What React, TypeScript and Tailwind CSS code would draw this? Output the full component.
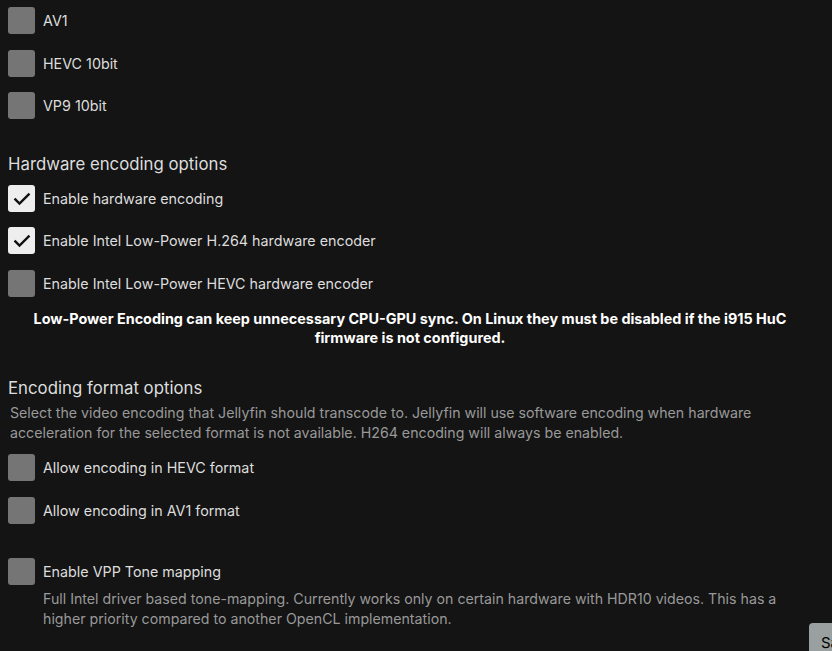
import React from "react";

function Check({ checked }: { checked?: boolean }) {
  return (
    <span
      className={`flex h-[27px] w-[27px] shrink-0 items-center justify-center rounded-[3px] ${
        checked ? "bg-[#eeeeee]" : "bg-[#757575]"
      }`}
    >
      {checked && (
        <svg width="20" height="20" viewBox="0 0 24 24" fill="none">
          <path d="M4 12.5l5 5L20 6.5" stroke="#111" strokeWidth="2.8" strokeLinecap="square" />
        </svg>
      )}
    </span>
  );
}

function Row({ label, checked, className = "" }: { label: string; checked?: boolean; className?: string }) {
  return (
    <label className={`flex items-center gap-[8px] pl-[8px] ${className}`}>
      <Check checked={checked} />
      <span className="text-[14.3px] leading-[20px] text-[#dddddd]">{label}</span>
    </label>
  );
}

export default function App() {
  return (
    <div className="relative h-[651px] w-[832px] overflow-hidden bg-[#141414] font-['Inter',sans-serif]">
      <div className="pt-[7px]">
        <Row label="AV1" />
        <Row label="HEVC 10bit" className="mt-[16px]" />
        <Row label="VP9 10bit" className="mt-[15px]" />

        <h2 className="mt-[33px] pl-[8px] text-[16.8px] leading-[24px] text-[#dddddd]">Hardware encoding options</h2>
        <Row label="Enable hardware encoding" checked className="mt-[9px]" />
        <Row label="Enable Intel Low-Power H.264 hardware encoder" checked className="mt-[15px]" />
        <Row label="Enable Intel Low-Power HEVC hardware encoder" className="mt-[16px]" />
        <p className="ml-[25px] mt-[12px] w-[770px] text-center text-[14.4px] font-bold leading-[19px] text-white">
          Low-Power Encoding can keep unnecessary CPU-GPU sync. On Linux they must be disabled if the i915 HuC firmware
          is not configured.
        </p>

        <h2 className="mt-[29px] pl-[8px] text-[16.8px] leading-[24px] text-[#dddddd]">Encoding format options</h2>
        <p className="mt-[3px] pl-[10px] pr-[40px] text-[14.2px] leading-[20px] text-[#999999]">
          Select the video encoding that Jellyfin should transcode to. Jellyfin will use software encoding when hardware
          acceleration for the selected format is not available. H264 encoding will always be enabled.
        </p>
        <Row label="Allow encoding in HEVC format" className="mt-[11px]" />
        <Row label="Allow encoding in AV1 format" className="mt-[16px]" />

        <Row label="Enable VPP Tone mapping" className="mt-[34px]" />
        <p className="mt-[4px] pl-[43px] pr-[20px] text-[14.2px] leading-[20px] text-[#999999]">
          Full Intel driver based tone-mapping. Currently works only on certain hardware with HDR10 videos. This has a
          higher priority compared to another OpenCL implementation.
        </p>
      </div>
      <button className="absolute left-[809px] top-[623px] h-[40px] w-[80px] rounded-[4px] bg-[#9aa0a0] pl-[12px] text-left text-[15px] text-black">
        Save
      </button>
    </div>
  );
}
